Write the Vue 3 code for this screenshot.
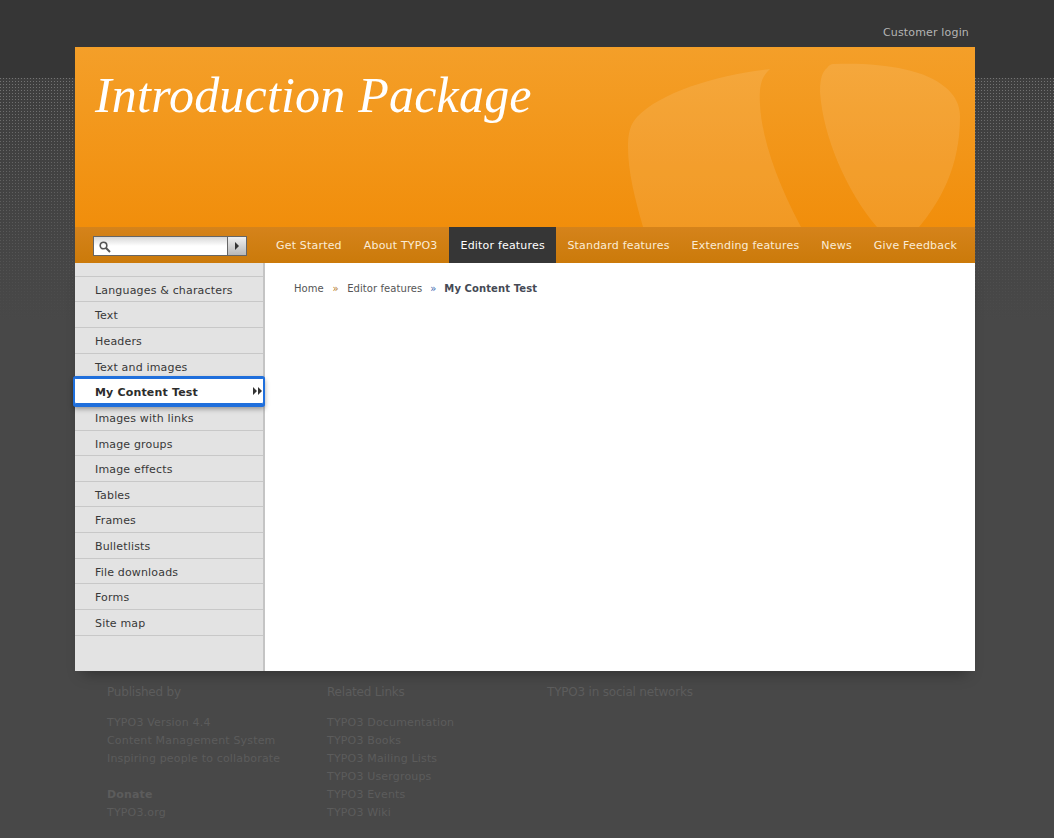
<script setup>
const navItems = [
  { label: 'Get Started' },
  { label: 'About TYPO3' },
  { label: 'Editor features', active: true },
  { label: 'Standard features' },
  { label: 'Extending features' },
  { label: 'News' },
  { label: 'Give Feedback' }
];

const menuItems = [
  'Languages & characters',
  'Text',
  'Headers',
  'Text and images',
  'My Content Test',
  'Images with links',
  'Image groups',
  'Image effects',
  'Tables',
  'Frames',
  'Bulletlists',
  'File downloads',
  'Forms',
  'Site map'
];

const relatedLinks = [
  'TYPO3 Documentation',
  'TYPO3 Books',
  'TYPO3 Mailing Lists',
  'TYPO3 Usergroups',
  'TYPO3 Events',
  'TYPO3 Wiki'
];
</script>

<template>
  <div class="page">
    <div class="top-band"></div>
    <div class="wrap">
      <div class="top-links">
        <a class="login">Customer login</a>
      </div>

      <header class="header">
        <h1 class="site-title">Introduction Package</h1>
        <svg class="logo-shape" width="340" height="180" viewBox="0 0 340 180">
          <path d="M145 22 C136 30 134 40 135 58 C137 92 152 135 176 180 L18 180 C10 152 3 125 3 100 C3 86 5 78 12 70 C35 45 95 27 145 22 Z" fill="#fff" fill-opacity="0.1" />
          <path d="M208 17 C255 15 300 22 320 40 C330 48 335 58 335 70 C335 120 315 155 294 180 L252 180 C222 145 198 90 195 45 C195 30 198 24 202 21 C204 18 206 17 208 17 Z" fill="#fff" fill-opacity="0.1" />
        </svg>
      </header>

      <nav class="navbar">
        <div class="search">
          <div class="search-field">
            <svg width="12" height="12" viewBox="0 0 12 12">
              <circle cx="4.5" cy="4.5" r="3.3" fill="none" stroke="#555" stroke-width="1.6" />
              <path d="M7 7 L11 11" stroke="#555" stroke-width="2" />
            </svg>
          </div>
          <div class="search-btn">
            <svg width="6" height="8" viewBox="0 0 6 8"><path d="M1 0 L5 4 L1 8 Z" fill="#333" /></svg>
          </div>
        </div>
        <ul class="nav-list">
          <li v-for="item in navItems" :key="item.label" :class="['nav-item', { active: item.active }]">{{ item.label }}</li>
        </ul>
      </nav>

      <main class="body">
        <aside class="sidebar">
          <ul class="menu">
            <li v-for="item in menuItems" :key="item" :class="['menu-item', { current: item === 'My Content Test' }]">
              <span>{{ item }}</span>
              <svg v-if="item === 'My Content Test'" class="menu-arrows" width="10" height="8" viewBox="0 0 10 8">
                <path d="M0 0 L4 4 L0 8 Z M5 0 L9 4 L5 8 Z" fill="#333" />
              </svg>
            </li>
          </ul>
        </aside>
        <section class="content">
          <div class="breadcrumb">
            <a>Home</a>
            <span class="sep">»</span>
            <a>Editor features</a>
            <span class="sep blue">»</span>
            <strong>My Content Test</strong>
          </div>
        </section>
      </main>

      <footer class="footer">
        <div class="foot-col">
          <h4>Published by</h4>
          <p>TYPO3 Version 4.4</p>
          <p>Content Management System</p>
          <p>Inspiring people to collaborate</p>
          <p>&nbsp;</p>
          <p><b>Donate</b></p>
          <p>TYPO3.org</p>
        </div>
        <div class="foot-col">
          <h4>Related Links</h4>
          <p v-for="link in relatedLinks" :key="link">{{ link }}</p>
        </div>
        <div class="foot-col">
          <h4>TYPO3 in social networks</h4>
        </div>
      </footer>
    </div>
  </div>
</template>

<style>
html, body {
  margin: 0;
  background: #484848;
}
</style>

<style scoped>
.page {
  position: relative;
  height: 838px;
  overflow: hidden;
  font-family: "DejaVu Sans", Verdana, sans-serif;
  letter-spacing: 0.17px;
  background: #484848;
}

.top-band {
  position: absolute;
  top: 0;
  left: 0;
  right: 0;
  height: 320px;
  background:
    linear-gradient(#363636 0 78px, transparent 78px),
    linear-gradient(rgba(72, 72, 72, 0) 78px, #484848 100%),
    conic-gradient(from 90deg at 1px 1px, #3e3e3e 0 180deg, #747474 180deg 270deg, #3e3e3e 270deg) 0 0 / 3px 3px;
}

.wrap {
  position: relative;
  width: 900px;
  margin: 0 auto;
  transform: translateX(-2px);
}

.top-links {
  height: 47px;
  display: flex;
  justify-content: flex-end;
  align-items: flex-start;
}

.login {
  margin-top: 26px;
  margin-right: 6px;
  font-size: 11px;
  line-height: 13px;
  color: #b4b4b4;
}

.header {
  position: relative;
  height: 180px;
  background: linear-gradient(#f49f29, #f18e0b);
  overflow: hidden;
}

.site-title {
  margin: 0;
  padding: 19px 0 0 20px;
  font-family: "Liberation Serif", Georgia, serif;
  font-style: italic;
  font-weight: normal;
  font-size: 50px;
  line-height: 58px;
  letter-spacing: 0.2px;
  color: #fff;
}

.logo-shape {
  position: absolute;
  top: 0;
  left: 550px;
}

.navbar {
  display: flex;
  align-items: stretch;
  height: 36px;
  background: linear-gradient(#d5831b, #cb7a0a);
}

.search {
  display: flex;
  width: 154px;
  height: 20px;
  margin: 9px 0 0 18px;
  border: 1px solid #666;
  box-sizing: border-box;
}

.search-field {
  flex: 1;
  padding: 4px 0 0 5px;
  background: linear-gradient(#d8d8d8, #fff 50%);
  box-sizing: border-box;
}

.search-field svg {
  display: block;
}

.search-btn {
  width: 18px;
  display: flex;
  align-items: center;
  justify-content: center;
  border-left: 1px solid #666;
  background: linear-gradient(#f0f0f0, #b8b8b8);
}

.nav-list {
  display: flex;
  list-style: none;
  margin: 0 0 0 18px;
  padding: 0;
}

.nav-item {
  height: 36px;
  box-sizing: border-box;
  padding: 1px 11px 0;
  font-size: 11px;
  line-height: 36px;
  letter-spacing: 0.185px;
  color: #fbecd6;
  white-space: nowrap;
}

.nav-item.active {
  padding: 1px 11.6px 0 12px;
  background: #363636;
  color: #fff;
}

.body {
  display: flex;
  height: 408px;
  background: #fff;
  box-shadow: 0 10px 14px -8px rgba(0, 0, 0, 0.35);
}

.sidebar {
  width: 188px;
  background: #e3e3e3;
  border-right: 2px solid #c4c4c4;
  flex-shrink: 0;
}

.menu {
  list-style: none;
  margin: 0;
  padding: 12.8px 0 0;
}

.menu-item {
  position: relative;
  display: flex;
  align-items: center;
  height: 25.64px;
  box-sizing: border-box;
  padding: 2.4px 0 0 20px;
  border-top: 1px solid #c8c8c8;
  font-size: 11px;
  color: #383838;
}

.menu-item:last-child {
  height: 26.64px;
  border-bottom: 1px solid #c8c8c8;
}

.menu-item.current {
  z-index: 1;
  padding-top: 1px;
  border-top-color: #1f6fdc;
  background: #fff;
  font-weight: bold;
  color: #2c2c2c;
  border-radius: 1px;
  box-shadow: inset 0 -1px 0 #1f6fdc, 0 0 0 2px #1f6fdc, 0 1px 0 2px #1f6fdc, 0 3px 5px 2px rgba(0, 0, 0, 0.35);
}

.menu-arrows {
  position: absolute;
  right: 0;
  top: 8px;
}

.content {
  flex: 1;
  padding: 19px 29px;
}

.breadcrumb {
  font-size: 10px;
  line-height: 13px;
  letter-spacing: 0.07px;
  color: #555;
}

.breadcrumb .sep {
  margin: 0 8.6px;
  color: #b5772a;
}

.breadcrumb .sep.blue {
  margin: 0 7.9px;
  color: #3a6ab0;
}

.breadcrumb strong {
  letter-spacing: 0.1px;
  color: #454a55;
}

.footer {
  display: flex;
  padding: 14px 0 0 32px;
  color: #5c5c5c;
  font-size: 11px;
  line-height: 18px;
}

.foot-col {
  width: 220px;
}

.foot-col h4 {
  margin: 0 0 15px;
  font-size: 12px;
  font-weight: normal;
  line-height: 14px;
  letter-spacing: -0.2px;
}

.foot-col p {
  margin: 0;
}
</style>
